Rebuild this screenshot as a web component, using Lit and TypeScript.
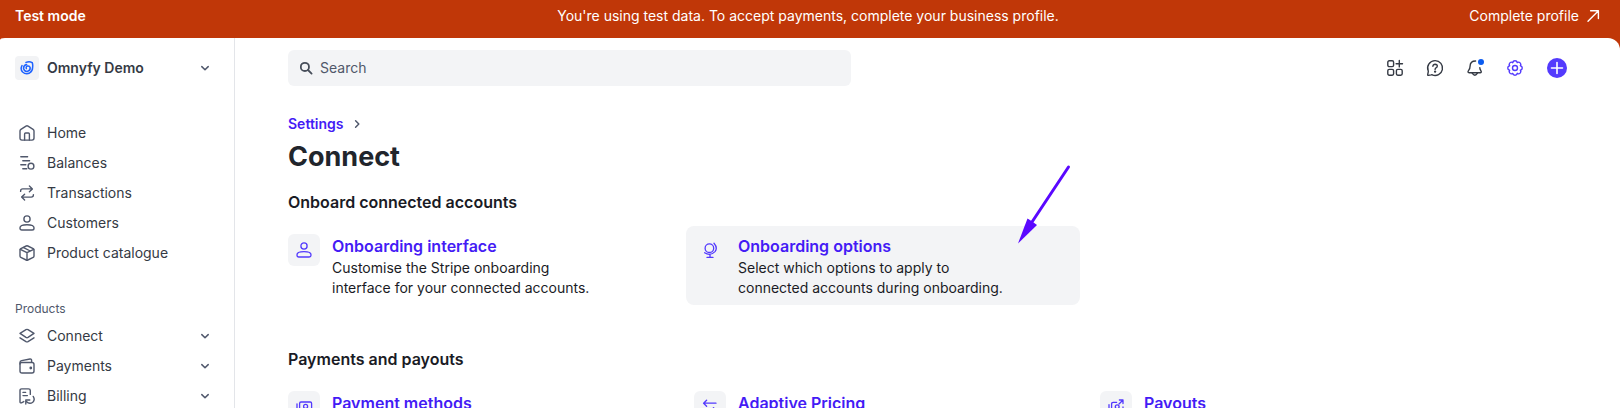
import { LitElement, html, css, svg, nothing, type TemplateResult } from "lit";
import { customElement, property } from "lit/decorators.js";

const glyphs: Record<string, TemplateResult> = {
  home: svg`<path d="M1 6.1 Q1 5 1.9 4.4 L7 1.1 Q8 .5 9 1.1 L14.1 4.4 Q15 5 15 6.1 V13 Q15 15.1 13 15.1 H3 Q1 15.1 1 13 Z"/><path d="M5.6 15 V9 Q5.6 8 6.6 8 H9.4 Q10.4 8 10.4 9 V15"/>`,
  balances: svg`<path d="M1.8 1.8 H8.6 M3.8 5.8 H10.6 M1.8 9.8 H6.8 M3.8 13.8 H7.8"/><circle cx="12" cy="11.2" r="2.9"/>`,
  transactions: svg`<path d="M1.6 6.4 V6 Q1.6 3.9 3.8 3.9 H13 M10.4 1 L13.4 3.9 L10.4 6.8"/><path d="M14.4 9.6 V10 Q14.4 12.1 12.2 12.1 H3 M5.6 9.2 L2.6 12.1 L5.6 15"/>`,
  person: svg`<circle cx="8" cy="4" r="3.1"/><path d="M1 12.8 C1 10.6 3.4 9.7 8 9.7 S15 10.6 15 12.8 V13.2 Q15 15 13.2 15 H2.8 Q1 15 1 13.2 Z"/>`,
  box: svg`<path d="M7.2 1 Q8 .6 8.8 1 L14.2 3.7 Q15 4.1 15 5 V11 Q15 11.9 14.2 12.3 L8.8 15 Q8 15.4 7.2 15 L1.8 12.3 Q1 11.9 1 11 V5 Q1 4.1 1.8 3.7 Z"/><path d="M1.3 4.4 L8 7.7 L14.7 4.4 M8 7.7 V15 M4.6 2.6 L11.3 6"/>`,
  layers: svg`<path d="M7 1.6 Q8 1.1 9 1.6 L15 5.4 L9 9.4 Q8 10 7 9.4 L1 5.4 Z"/><path d="M1 9.8 L7 13.6 Q8 14.2 9 13.6 L15 9.8"/>`,
  wallet: svg`<path d="M1 6 Q1 4.5 2.5 4.5 H13 Q15 4.5 15 6.5 V13 Q15 15 13 15 H3 Q1 15 1 13 Z"/><path d="M1 6 V4.4 Q1 2.9 2.6 2.6 L11 1 Q12.6 .8 12.6 2.4 V4.3"/><circle cx="11.8" cy="10" r=".7" fill="currentColor"/>`,
  billing: svg`<path d="M4.8 13.6 L2.4 14.8 Q1 15.2 1 13.8 V2.6 Q1 .9 2.7 .9 H9.5 Q11.3 .9 11.3 2.6 V6.4"/><path d="M4 4.4 H6.6 M4 7.6 H8.4"/><path d="M14.2 8.4 Q16.4 11.8 13.8 14.2 Q10.4 16.6 7.4 13.4 M6.8 16 V12 H10.8"/>`,
  globe: svg`<circle cx="7.4" cy="6.2" r="4.3"/><path d="M12 1.2 Q16 5.8 13 9.6 Q8.2 14.4 2.6 10.8 M8 12.8 V15.2 M5 15.4 H11"/>`,
  cash: svg`<rect x="3.6" y="3" width="12" height="9" rx="1.4"/><circle cx="9.6" cy="7.4" r="2"/><path d="M1 4.8 V12.8 Q1 14.4 2.6 14.4 H12"/>`,
  swap: svg`<path d="M14 4.2 H1.6 M4.6 1.2 L1.6 4.2 L4.6 7.2 M2 11.6 H14.4 M11.4 8.6 L14.4 11.6 L11.4 14.6"/>`,
  payout: svg`<path d="M8.6 3.4 H5.2 Q3.6 3.4 3.6 5 V10.4 Q3.6 12 5.2 12 H13.4 Q15 12 15 10.4 V8"/><circle cx="9.2" cy="7.8" r="1.9"/><path d="M1 5.6 V12.8 Q1 14.6 2.8 14.6 H12 M11 5 L14.8 1.2 M11.4 1 H15 V4.6"/>`,
  apps: svg`<rect x=".8" y=".8" width="5.8" height="5.8" rx="1.4"/><rect x=".8" y="9.4" width="5.8" height="5.8" rx="1.4"/><rect x="9.4" y="9.4" width="5.8" height="5.8" rx="1.4"/><path d="M12.3 .5 V6.9 M9.1 3.7 H15.5"/>`,
  help: svg`<path d="M8.2 .6 A7.4 7.4 0 1 1 5.2 14.8 Q4.8 14.7 4.2 14.9 L1.4 15.4 Q.6 15.5 .7 14.7 L1.3 11.6 Q1.3 11.2 1.2 10.8 A7.4 7.4 0 0 1 8.2 .6 Z"/><path d="M5.9 6.2 Q6.1 4.2 8.1 4.2 Q10.3 4.3 10.3 6.1 Q10.3 7.3 9 7.9 Q8.1 8.4 8.1 9.4"/><circle cx="8.1" cy="11.6" r=".5" fill="currentColor"/>`,
  bell: svg`<path d="M8.6 1 Q3.2 1 3.1 6 Q3.1 8.8 1.5 10.6 Q.2 12.6 2.2 12.7 H13 Q15 12.6 13.9 10.8 Q12.8 9.4 12.8 7.6"/><path d="M5.2 13.2 Q8 17.4 10.4 13.2"/>`,
  gear: svg`<path d="M13.36 5.78 A2.25 2.25 0 0 1 13.36 10.22 A2.25 2.25 0 0 1 10.22 13.36 A2.25 2.25 0 0 1 5.78 13.36 A2.25 2.25 0 0 1 2.64 10.22 A2.25 2.25 0 0 1 2.64 5.78 A2.25 2.25 0 0 1 5.78 2.64 A2.25 2.25 0 0 1 10.22 2.64 A2.25 2.25 0 0 1 13.36 5.78 Z"/><circle cx="8" cy="8" r="2.5"/>`,
  plus: svg`<path d="M8 2.5 V13.5 M2.5 8 H13.5"/>`,
  search: svg`<circle cx="6.9" cy="6.9" r="4.1"/><path d="M10 10 L13.6 13.6"/>`,
  external: svg`<path d="M3 13.2 L13.2 3 M5.6 2.8 H13.4 V10.6"/>`,
  down: svg`<path d="M4.8 6.6 L8 9.8 L11.2 6.6"/>`,
  right: svg`<path d="M6.6 4.8 L9.8 8 L6.6 11.2"/>`,
};

@customElement("ui-icon")
class UiIcon extends LitElement {
  @property() name = "";
  @property({ type: Number }) weight = 1.4;
  static styles = css`
    :host { display: inline-flex; flex: none; width: 16px; height: 16px; }
    .glyph { width: 100%; height: 100%; fill: none; stroke: currentColor; stroke-linecap: round; stroke-linejoin: round; overflow: visible; }
  `;
  render() {
    return html`<svg class="glyph" viewBox="0 0 16 16" stroke-width=${this.weight} aria-hidden="true">${glyphs[this.name]}</svg>`;
  }
}

interface NavItem { label: string; icon: string; }
interface Setting { title: string; icon: string; text?: string; active?: boolean; }

const mainNav: NavItem[] = [
  { label: "Home", icon: "home" },
  { label: "Balances", icon: "balances" },
  { label: "Transactions", icon: "transactions" },
  { label: "Customers", icon: "person" },
  { label: "Product catalogue", icon: "box" },
];
const productNav: NavItem[] = [
  { label: "Connect", icon: "layers" },
  { label: "Payments", icon: "wallet" },
  { label: "Billing", icon: "billing" },
];
const sections: { heading: string; items: Setting[] }[] = [
  {
    heading: "Onboard connected accounts",
    items: [
      { title: "Onboarding interface", icon: "person", text: "Customise the Stripe onboarding interface for your connected accounts." },
      { title: "Onboarding options", icon: "globe", text: "Select which options to apply to connected accounts during onboarding.", active: true },
    ],
  },
  {
    heading: "Payments and payouts",
    items: [
      { title: "Payment methods", icon: "cash" },
      { title: "Adaptive Pricing", icon: "swap" },
      { title: "Payouts", icon: "payout" },
    ],
  },
];

@customElement("app-root")
class AppRoot extends LitElement {
  static styles = css`
    :host {
      display: flex; flex-direction: column; height: 100vh; overflow: hidden;
      background: #c03708; color: #353a44;
      font: 400 14px/20px Inter, "Liberation Sans", sans-serif;
    }
    * { box-sizing: border-box; }
    a { color: inherit; text-decoration: none; }
    button { font: inherit; color: inherit; background: none; border: 0; padding: 0; text-align: left; cursor: pointer; }
    h1, h2, h3, p, ul { margin: 0; padding: 0; }
    ul { list-style: none; }

    .banner { display: grid; grid-template-columns: 1fr auto 1fr; padding: 6px 19px 12px 15px; color: #fff; }
    .mode { font-weight: 600; }
    .complete { justify-self: end; display: flex; align-items: center; gap: 6px; }

    .shell { flex: 1; min-height: 0; display: flex; background: #fff; border-radius: 5px 12px 0 0 / 2px 12px 0 0; overflow: hidden; }

    .sidebar { flex: none; width: 235px; padding: 18px 21px 0 15px; border-right: 1px solid #e3e5e9; }
    .account, .item { display: flex; align-items: center; gap: 8px; width: 100%; }
    .account { height: 24px; margin-bottom: 38px; font-weight: 600; }
    .logo { display: grid; place-items: center; width: 24px; height: 24px; border-radius: 4px; background: #f2f3f5; }
    .label { flex: 1; }
    .item { height: 30px; }
    .slot { display: grid; place-items: center; width: 24px; color: #50586c; }
    .chevron { color: #50586c; }
    .group { margin: 31px 0 2px; font-size: 12px; line-height: 20px; font-weight: 400; color: #50586c; }

    .main { flex: 1; min-width: 0; padding: 12px 53px 0 53px; }
    .top { display: flex; justify-content: space-between; align-items: center; }
    .search { display: flex; align-items: center; gap: 6px; flex: 0 1 563px; height: 36px; padding: 0 10px; border-radius: 6px; background: #f3f4f6; color: #474e5a; }
    .field { flex: 1; min-width: 0; border: 0; padding: 0; outline: 0; background: none; font: inherit; color: inherit; }
    .field::placeholder { color: #50586a; opacity: 1; }
    .tools { display: flex; align-items: center; gap: 24px; color: #353a44; }
    .tool { position: relative; display: flex; }
    .dot { position: absolute; top: -1px; right: -1px; width: 6px; height: 6px; border-radius: 50%; background: #0b5cf0; }
    .current { color: #533afd; }
    .add { display: grid; place-items: center; width: 20px; height: 20px; border-radius: 50%; background: #533afd; color: #fff; }

    .crumbs { display: flex; align-items: center; gap: 5px; margin-top: 28px; color: #50586c; }
    .crumb { font-weight: 600; color: #441bf5; }
    .title { margin-top: 5px; font-size: 27px; line-height: 36px; font-weight: 700; color: #21252c; }
    .section { margin-top: 15px; }
    .section + .section { margin-top: 42px; }
    .heading { font-size: 16px; line-height: 24px; font-weight: 600; color: #1a1b25; }
    .cards { display: grid; grid-template-columns: repeat(3, minmax(0, 394px)); gap: 12px; margin: 12px 0 0 -8px; }
    .card { position: relative; display: flex; gap: 12px; padding: 8px 8px 7px; border-radius: 8px; }
    .active { background: #f3f4f6; }
    .tile { flex: none; display: grid; place-items: center; width: 32px; height: 32px; border-radius: 6px; background: #f3f4f6; color: #533afd; }
    .name { font-size: 16px; line-height: 24px; font-weight: 600; color: #441bf5; }
    .text { max-width: 272px; color: #1a1b25; }
    .pointer { position: absolute; top: -64px; right: 8px; width: 58px; height: 84px; pointer-events: none; }
  `;

  private item(n: NavItem, expandable: boolean) {
    const body = html`<span class="slot"><ui-icon name=${n.icon}></ui-icon></span><span class="label">${n.label}</span>`;
    return html`<li>${expandable
      ? html`<button class="item" aria-expanded="false">${body}<ui-icon class="chevron" name="down" weight="1.5"></ui-icon></button>`
      : html`<a class="item" href="#">${body}</a>`}</li>`;
  }

  private card(s: Setting) {
    return html`<a class="card ${s.active ? "active" : ""}" href="#">
      <span class="tile"><ui-icon name=${s.icon} weight="1.3"></ui-icon></span>
      <div>
        <h3 class="name">${s.title}</h3>
        ${s.text ? html`<p class="text">${s.text}</p>` : nothing}
      </div>
      ${s.active
        ? html`<svg class="pointer" viewBox="0 0 58 84" aria-hidden="true">
            <path d="M54.5 5 L18 60" stroke="#5a08ff" stroke-width="3" stroke-linecap="round"/>
            <path d="M4 81.5 L13.5 56.5 L17.5 59 L23 63 Z" fill="#5a08ff"/>
          </svg>`
        : nothing}
    </a>`;
  }

  render() {
    return html`
      <div class="banner">
        <span class="mode">Test mode</span>
        <span>You're using test data. To accept payments, complete your business profile.</span>
        <a class="complete" href="#">Complete profile <ui-icon name="external"></ui-icon></a>
      </div>
      <div class="shell">
        <nav class="sidebar" aria-label="Main">
          <button class="account">
            <span class="logo">
              <svg width="14" height="14" viewBox="0 0 14 14" fill="none" stroke="#1f63ff" stroke-width="1.5" stroke-linecap="round" aria-hidden="true">
                <path d="M2 4.6 Q0 8 2.6 11 Q5.8 13.8 9.6 12 Q12.6 10 12.6 6.4 Q13 3.6 12.2 1.6 Q9.4 .2 6 1.4"/>
                <path d="M6.6 3.6 Q3.6 4.2 3.5 7.4 Q4.2 10.6 7.2 10.4 Q10.4 9.8 10.2 6.8 Q9.6 4.6 7.4 5 Q5.6 5.8 6.4 7.6"/>
              </svg>
            </span>
            <span class="label">Omnyfy Demo</span>
            <ui-icon class="chevron" name="down" weight="1.5"></ui-icon>
          </button>
          <ul>${mainNav.map((n) => this.item(n, false))}</ul>
          <h2 class="group">Products</h2>
          <ul>${productNav.map((n) => this.item(n, true))}</ul>
        </nav>
        <main class="main">
          <header class="top">
            <label class="search">
              <ui-icon name="search" weight="1.8"></ui-icon>
              <input class="field" type="search" placeholder="Search" aria-label="Search" />
            </label>
            <div class="tools">
              <button class="tool" aria-label="Apps"><ui-icon name="apps"></ui-icon></button>
              <button class="tool" aria-label="Help"><ui-icon name="help"></ui-icon></button>
              <button class="tool" aria-label="Notifications"><ui-icon name="bell"></ui-icon><span class="dot"></span></button>
              <button class="tool current" aria-label="Settings"><ui-icon name="gear"></ui-icon></button>
              <button class="add" aria-label="Create"><ui-icon name="plus" weight="1.6"></ui-icon></button>
            </div>
          </header>
          <nav class="crumbs" aria-label="Breadcrumb"><a class="crumb" href="#">Settings</a><ui-icon name="right" weight="1.5"></ui-icon></nav>
          <h1 class="title">Connect</h1>
          ${sections.map((s) => html`<section class="section">
            <h2 class="heading">${s.heading}</h2>
            <div class="cards">${s.items.map((i) => this.card(i))}</div>
          </section>`)}
        </main>
      </div>
    `;
  }
}
